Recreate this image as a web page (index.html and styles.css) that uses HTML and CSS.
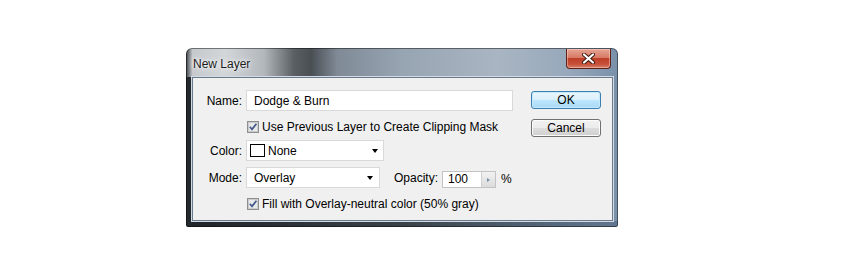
FILE: index.html
```html
<!DOCTYPE html>
<html lang="en">
<head>
  <meta charset="UTF-8" />
  <title>New Layer</title>
  <link rel="stylesheet" href="styles.css">
</head>
<body>
  <div class="dialog">
    <!-- Barre de titre -->
    <div class="titlebar">
      <span class="title">New Layer</span>
      <button class="close-btn">
        <svg width="13" height="11" viewBox="0 0 13 11">
          <path d="M2 1.5 L11 9.5 M11 1.5 L2 9.5" stroke="#3b1510" stroke-width="4" stroke-linecap="round"/>
          <path d="M2 1.5 L11 9.5 M11 1.5 L2 9.5" stroke="#fff" stroke-width="2.2" stroke-linecap="round"/>
        </svg>
      </button>
    </div>
    <!-- Zone client -->
    <div class="client">
      <div class="form">
        <div class="row row-name">
          <span class="lbl">Name:</span>
          <div class="field name-field">Dodge &amp; Burn</div>
        </div>
        <div class="row row-check">
          <span class="check">
            <svg width="12" height="12" viewBox="0 0 12 12">
              <rect x="0.5" y="0.5" width="11" height="11" fill="#f4f4f4" stroke="#8e8f8f"/>
              <rect x="1.5" y="1.5" width="9" height="9" fill="#e8e9ea" stroke="#c9cbcd"/>
              <path d="M2.8 5.8 L5 8.4 L9.4 2.8" fill="none" stroke="#46598c" stroke-width="1.7"/>
            </svg>
          </span>
          <span>Use Previous Layer to Create Clipping Mask</span>
        </div>
        <div class="row row-color">
          <span class="lbl">Color:</span>
          <div class="field select color-select">
            <span class="swatch"></span>
            <span class="select-text">None</span>
            <span class="arrow"></span>
          </div>
        </div>
        <div class="row row-mode">
          <span class="lbl">Mode:</span>
          <div class="field select mode-select">
            <span class="select-text">Overlay</span>
            <span class="arrow"></span>
          </div>
          <span class="opacity-lbl">Opacity:</span>
          <div class="spin">
            <span class="spin-value">100</span>
            <span class="spin-btn"><span class="spin-tri"></span></span>
          </div>
          <span class="pct">%</span>
        </div>
        <div class="row row-check row-fill">
          <span class="check">
            <svg width="12" height="12" viewBox="0 0 12 12">
              <rect x="0.5" y="0.5" width="11" height="11" fill="#f4f4f4" stroke="#8e8f8f"/>
              <rect x="1.5" y="1.5" width="9" height="9" fill="#e8e9ea" stroke="#c9cbcd"/>
              <path d="M2.8 5.8 L5 8.4 L9.4 2.8" fill="none" stroke="#46598c" stroke-width="1.7"/>
            </svg>
          </span>
          <span>Fill with Overlay-neutral color (50% gray)</span>
        </div>
      </div>
      <div class="buttons">
        <button class="btn btn-ok">OK</button>
        <button class="btn">Cancel</button>
      </div>
    </div>
  </div>
</body>
</html>
```

FILE: styles.css
```css
body {
  margin: 0;
  padding: 48px 0 0 186px;
  background: #fff;
  font-family: 'Liberation Sans', Arial, sans-serif;
  font-size: 12px;
  color: #000;
}
/* Cadre Aero */
.dialog {
  width: 432px;
  height: 179px;
  box-sizing: border-box;
  border-radius: 6px 6px 2px 2px;
  display: flex;
  flex-direction: column;
  background:
    linear-gradient(#23282c, #23282c) left 29px / 6px 100% no-repeat,
    linear-gradient(90deg, #1f2428 0%, #3a4249 50%, #627890 100%) left bottom / 100% 6px no-repeat,
    linear-gradient(90deg, #3b4045 0, #c5c9cd 1.5%, #d3d6d9 9%, #b3b8bd 18%, #5a5f64 25%, #4a4f54 29%, #7f8a96 35%, #97a4b2 50%, #a9b5c2 72%, #98a9bc 88%, #7990aa 100%);
  box-shadow: inset 0 0 0 1px rgba(0,0,0,.45);
}
.titlebar {
  height: 29px;
  flex: none;
  display: flex;
  justify-content: space-between;
  align-items: flex-start;
}
.title {
  margin: 9px 0 0 7px;
  font-size: 12px;
  color: #1b1b1b;
  text-shadow: 0 0 6px #fff, 0 0 3px #fff;
}
.close-btn {
  margin: 1px 7px 0 0;
  width: 45px;
  height: 20px;
  padding: 0;
  border: 1px solid #5e2219;
  border-top: none;
  border-radius: 0 0 4px 4px;
  background: linear-gradient(#e7a594 0%, #d77a66 45%, #bf3f28 50%, #c6513a 80%, #d8806a 100%);
  display: flex;
  align-items: center;
  justify-content: center;
  box-shadow: inset 0 0 0 1px rgba(255,220,210,.45);
}
.client {
  height: 144px;
  margin: 0 5px 0 6px;
  box-sizing: border-box;
  border: 1px solid #6b7a8a;
  background: #f0f0f0;
  display: flex;
  box-shadow: 0 0 0 1px #d2dae3;
}
/* Formulaire */
.form {
  width: 320px;
  padding-top: 12px;
  display: flex;
  flex-direction: column;
}
.row { display: flex; align-items: center; }
.lbl { width: 49px; text-align: right; margin-right: 4px; }
.field {
  height: 21px;
  box-sizing: border-box;
  background: #fff;
  border: 1px solid #d9d9d9;
  display: flex;
  align-items: center;
}
.name-field { width: 267px; padding-left: 7px; }
.row-check { height: 16px; margin-top: 8px; padding-left: 54px; }
.check { width: 12px; height: 12px; margin-right: 3px; display: flex; }
.row-color { margin-top: 5px; }
.row-mode { margin-top: 6px; }
.row-fill { margin-top: 8px; }
.select { position: relative; padding-left: 3px; }
.color-select { width: 138px; }
.mode-select { width: 134px; padding-left: 7px; }
.swatch {
  width: 15px;
  height: 13px;
  box-sizing: border-box;
  border: 1px solid #000;
  background: #fff;
  margin-right: 3px;
}
.arrow {
  position: absolute;
  right: 5px;
  top: 8px;
  border-left: 3.5px solid transparent;
  border-right: 3.5px solid transparent;
  border-top: 4px solid #000;
}
.mode-select .arrow { right: 6px; }
.opacity-lbl { margin-left: 14px; margin-right: 4px; }
.spin {
  width: 54px;
  height: 17px;
  margin-top: 4px;
  box-sizing: border-box;
  border: 1px solid #c3c3c3;
  background: #fff;
  display: flex;
}
.spin-value { width: 33px; padding-left: 5px; line-height: 15px; }
.spin-btn {
  flex: 1;
  border-left: 1px solid #d0d0d0;
  background: linear-gradient(#f2f2f2, #dcdcdc);
  display: flex;
  align-items: center;
  justify-content: center;
}
.spin-tri {
  border-top: 2.5px solid transparent;
  border-bottom: 2.5px solid transparent;
  border-left: 3px solid #7c8ea3;
}
.pct { margin-left: 5px; margin-top: 3px; }
/* Boutons */
.buttons {
  margin-left: 18px;
  padding-top: 13px;
  display: flex;
  flex-direction: column;
  gap: 10px;
}
.btn {
  width: 70px;
  height: 18px;
  padding: 0;
  font-family: 'Liberation Sans', Arial, sans-serif;
  font-size: 12px;
  color: #000;
  border: 1px solid #707070;
  border-radius: 3px;
  background: linear-gradient(#f2f2f2 0%, #ebebeb 50%, #dddddd 51%, #cfcfcf 100%);
  box-shadow: inset 0 0 0 1px #fcfcfc;
}
.btn-ok {
  border-color: #3c7fb1;
  background: linear-gradient(#eaf6fd 0%, #d9f0fc 50%, #bee6fd 51%, #a7d9f5 100%);
  box-shadow: inset 0 0 0 1px #c4e9fc;
}
```
